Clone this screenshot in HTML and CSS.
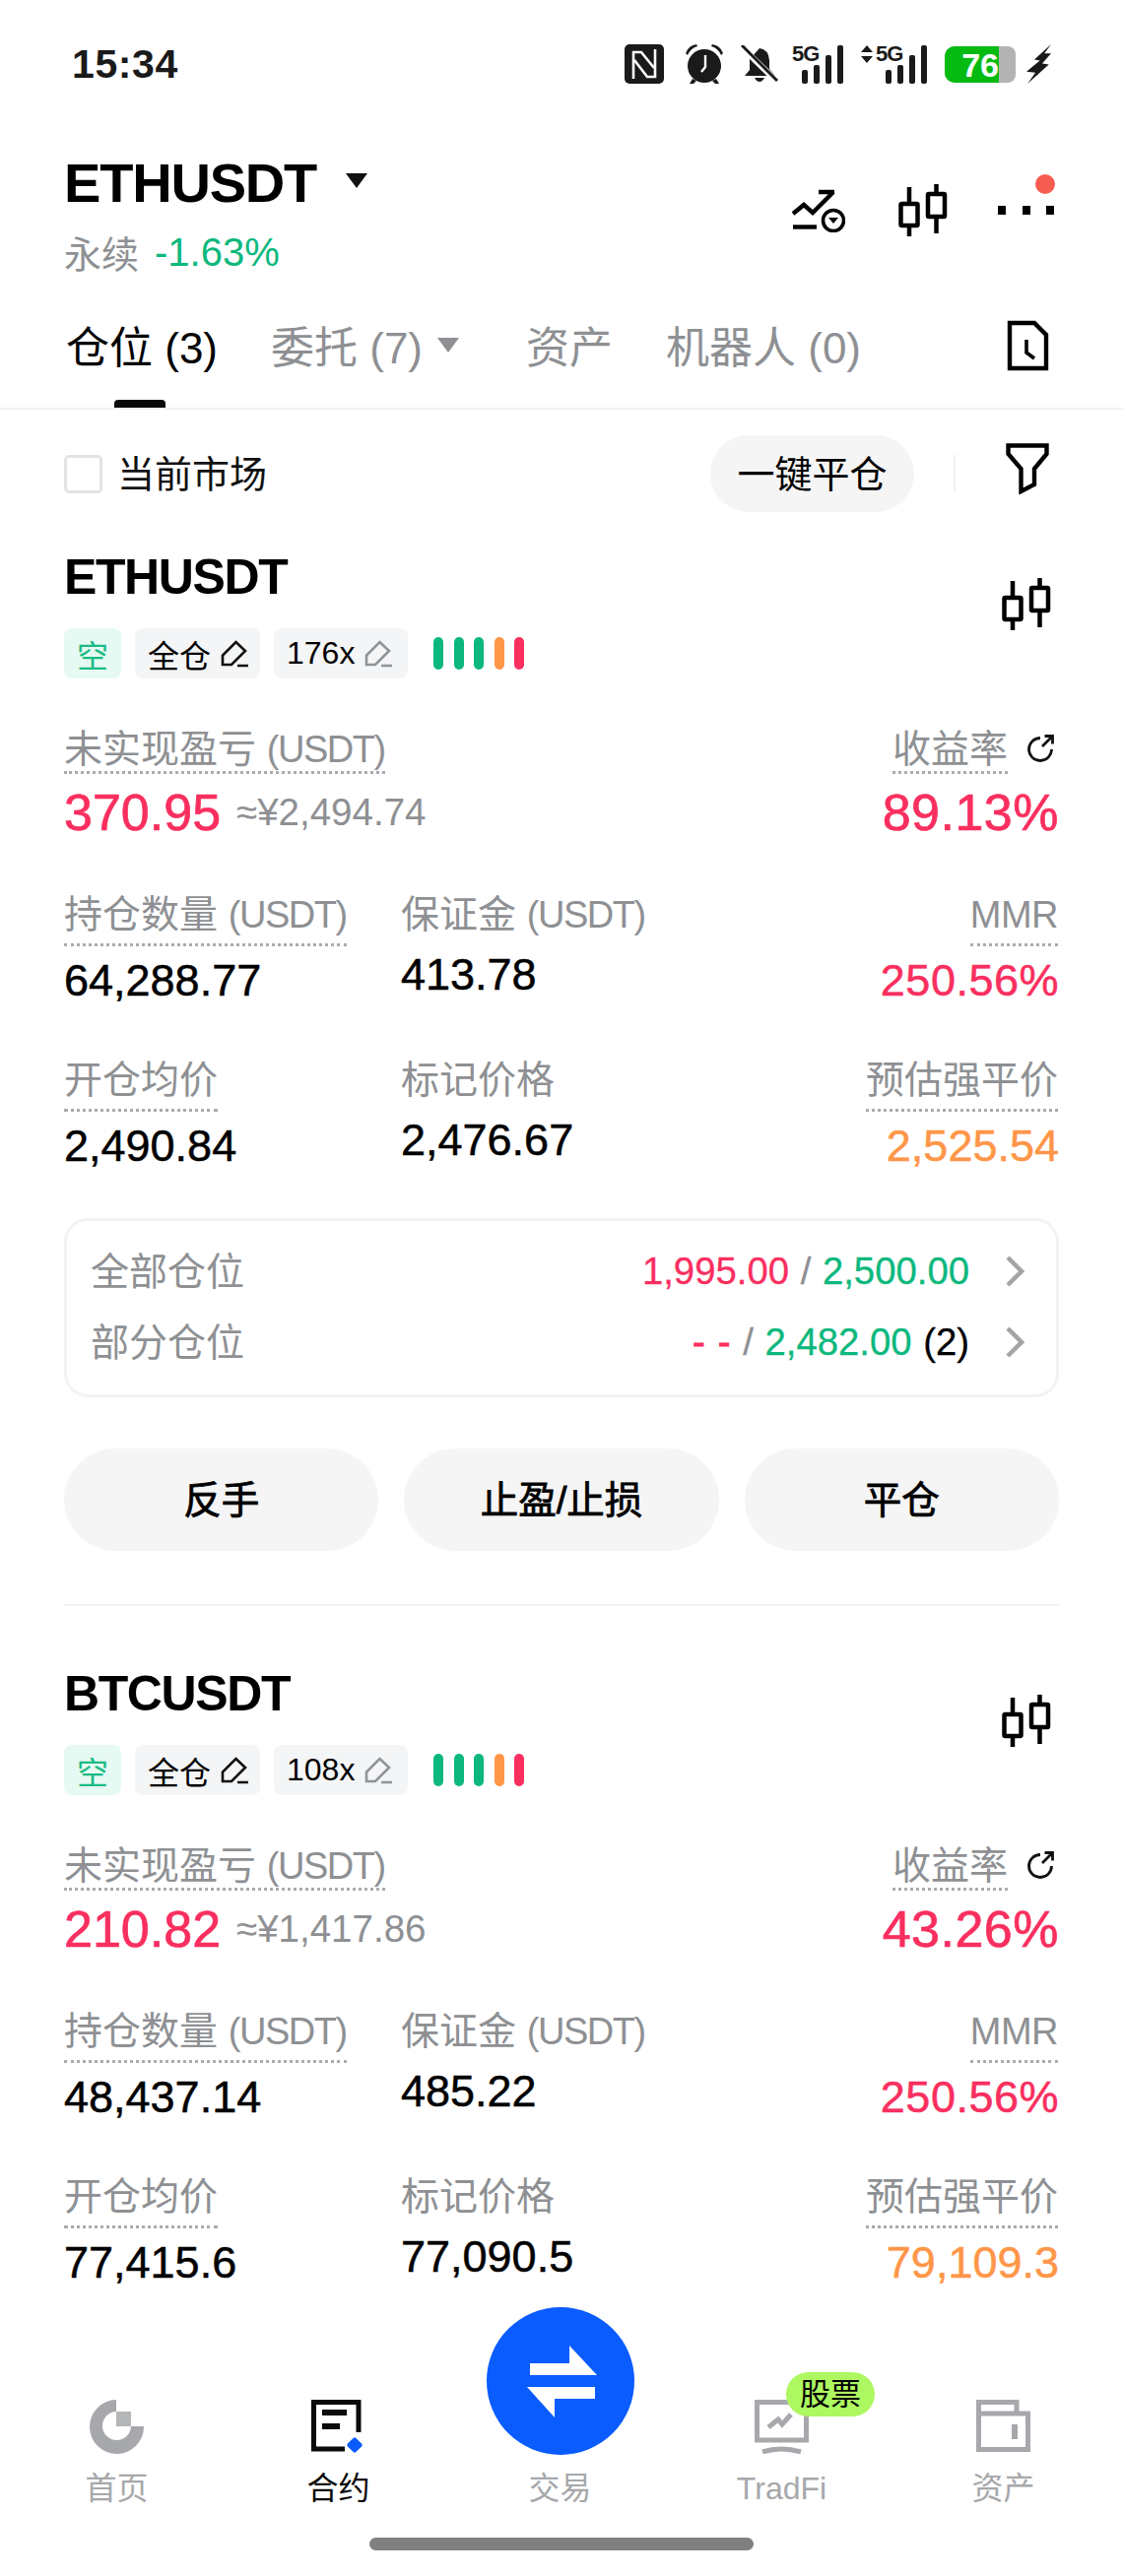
FILE: index.html
```html
<!DOCTYPE html>
<html lang="zh-CN">
  <head>
    <meta charset="UTF-8" />
    <meta name="viewport" content="width=device-width, initial-scale=1" />
    <title>ETHUSDT 仓位</title>
    <link rel="stylesheet" href="styles.css">
  </head>
  <body>
    <svg class="sprite" aria-hidden="true">
      <symbol id="candle" viewBox="0 0 50 54">
        <g fill="none" stroke="currentColor" stroke-width="4.5">
          <rect x="2.5" y="20" width="17" height="22" rx="1" />
          <path d="M11 3V20M11 42V53" />
          <rect x="30" y="10" width="17" height="23" rx="1" />
          <path d="M38.5 0V10M38.5 33V50" />
        </g>
      </symbol>
      <symbol id="pencil" viewBox="0 0 28 28">
        <path d="M2 25V15.5L15.5 2L25 11L11 25ZM17 26H28" fill="none" stroke="currentColor" stroke-width="2.6" />
      </symbol>
      <symbol id="refresh" viewBox="0 0 30 30">
        <g fill="none" stroke="currentColor" stroke-width="2.8">
          <path d="M15 4.5A11.5 11.5 0 1 0 26.5 16" />
          <path d="M17 13L27.5 2.5M19.5 2.5H27.5V10.5" />
        </g>
      </symbol>
      <symbol id="chevron" viewBox="0 0 19 32">
        <path d="M2 2L16 16L2 30" fill="none" stroke="currentColor" stroke-width="4.5" />
      </symbol>
    </svg>

    <div class="status">
      <span class="time">15:34</span>
      <div class="status-icons">
        <svg class="ic-nfc" viewBox="0 0 40 40">
          <rect width="40" height="40" rx="5" fill="#1a1a1a" />
          <path d="M9 35V8H17L30 24M31 5V33H23L10 16" fill="none" stroke="#fff" stroke-width="2.6" />
        </svg>
        <svg class="ic-alarm" viewBox="0 0 40 42">
          <circle cx="20" cy="23" r="17" fill="#1a1a1a" />
          <path d="M1 10Q4 2 12 1L13 3Q6 5 3 12ZM39 10Q36 2 28 1L27 3Q34 5 37 12Z" fill="#1a1a1a" />
          <path d="M8 36L5 41H9L12 38ZM32 36L35 41H31L28 38Z" fill="#1a1a1a" />
          <path d="M21 12V24L17 29" fill="none" stroke="#fff" stroke-width="2.4" />
        </svg>
        <svg class="ic-bell" viewBox="0 0 38 38">
          <path d="M19 3Q28 4 29 15V24L35 31H4L9 25V14Z" fill="#1a1a1a" />
          <path d="M14 33H24Q22 37 19 37T14 33Z" fill="#1a1a1a" />
          <path d="M0 1L37 37" stroke="#fff" stroke-width="6" />
          <path d="M1 0L37 36" stroke="#1a1a1a" stroke-width="3" />
        </svg>
        <div class="signal">
          <span class="net">5G</span>
          <i class="bar b1"></i><i class="bar b2"></i><i class="bar b3"></i><i class="bar b4"></i>
        </div>
        <div class="signal signal-data">
          <svg class="updown" viewBox="0 0 12 18"><path d="M6 0L12 7H0ZM6 18L0 11H12Z" fill="#1a1a1a" /></svg>
          <span class="net">5G</span>
          <i class="bar b1"></i><i class="bar b2"></i><i class="bar b3"></i><i class="bar b4"></i>
        </div>
        <div class="battery"><span class="battery-fill">76</span></div>
        <svg class="ic-bolt" viewBox="0 0 22 39" preserveAspectRatio="none">
          <path d="M22 0L7 15L12 16L0 27L8 28L1 39L20 20L14 19L22 9L16 9Z" fill="#1a1a1a" />
        </svg>
      </div>
    </div>

    <header class="head">
      <div>
        <div class="pair">ETHUSDT<i class="tri tri-pair"></i></div>
        <div class="pair-sub"><span class="perp">永续</span><span class="change">-1.63%</span></div>
      </div>
      <div class="head-tools">
        <svg class="ic-chart" viewBox="0 0 54 44">
          <g fill="none" stroke="#000" stroke-width="4.4">
            <path d="M1 25L12 16L21 24L42 3M27 3H43" />
            <path d="M1 38.5H25" />
            <circle cx="42" cy="32" r="10.5" stroke-width="3.6" />
          </g>
          <path d="M37 29H47L42 35Z" />
        </svg>
        <svg class="ic-candle"><use href="#candle" /></svg>
        <div class="more">
          <i></i><i></i><i></i>
          <span class="red-dot"></span>
        </div>
      </div>
    </header>

    <nav class="tabs">
      <div class="tab active">仓位 (3)</div>
      <div class="tab">委托 (7)<i class="tri tri-tab"></i></div>
      <div class="tab">资产</div>
      <div class="tab">机器人 (0)</div>
      <svg class="ic-doc" viewBox="0 0 43 52">
        <path d="M3 3H28L40 15V49H3Z" fill="none" stroke="#000" stroke-width="4.4" />
        <path d="M20 20V33L28 39" fill="none" stroke="#000" stroke-width="3.6" />
      </svg>
    </nav>

    <main class="content">
      <div class="filter-row">
        <label class="check"><span class="check-box"></span><span class="check-text">当前市场</span></label>
        <div class="filter-right">
          <button class="close-all">一键平仓</button>
          <span class="vline"></span>
          <svg class="ic-filter" viewBox="0 0 44 52">
            <path d="M2.5 2.5H41.5V11L29 26V42L15.5 49V26L2.5 11Z" fill="none" stroke="#000" stroke-width="4.4" />
          </svg>
        </div>
      </div>

      <section class="position">
        <div class="pos-head">
          <div>
            <h2 class="pos-title">ETHUSDT</h2>
            <div class="tags">
              <span class="tag tag-short">空</span>
              <span class="tag">全仓<svg class="ic-pencil"><use href="#pencil" /></svg></span>
              <span class="tag">176x<svg class="ic-pencil muted"><use href="#pencil" /></svg></span>
              <span class="risk"><i class="g"></i><i class="g"></i><i class="g"></i><i class="o"></i><i class="r"></i></span>
            </div>
          </div>
          <svg class="ic-candle pos-candle"><use href="#candle" /></svg>
        </div>

        <div class="pnl">
          <div class="metric">
            <span class="label dotted tight">未实现盈亏 <span class="unit">(USDT)</span></span>
            <div class="pnl-value"><span class="big red">370.95</span><span class="approx">≈¥2,494.74</span></div>
          </div>
          <div class="metric right">
            <div class="label-line">
              <span class="label dotted tight">收益率</span>
              <svg class="ic-refresh"><use href="#refresh" /></svg>
            </div>
            <div class="pnl-value"><span class="big pct red">89.13%</span></div>
          </div>
        </div>

        <div class="grid">
          <div class="metric"><span class="label dotted">持仓数量 <span class="unit">(USDT)</span></span><div class="value">64,288.77</div></div>
          <div class="metric"><span class="label">保证金 <span class="unit">(USDT)</span></span><div class="value plain">413.78</div></div>
          <div class="metric right"><span class="label dotted"><span class="unit mmr">MMR</span></span><div class="value pct red">250.56%</div></div>
          <div class="metric"><span class="label dotted">开仓均价</span><div class="value">2,490.84</div></div>
          <div class="metric"><span class="label">标记价格</span><div class="value plain">2,476.67</div></div>
          <div class="metric right"><span class="label dotted">预估强平价</span><div class="value orange">2,525.54</div></div>
        </div>

        <div class="tpsl">
          <div class="tpsl-row">
            <span class="tpsl-name">全部仓位</span>
            <span class="tpsl-val"><span class="red">1,995.00</span> <span class="grey">/</span> <span class="green">2,500.00</span></span>
            <svg class="ic-chevron"><use href="#chevron" /></svg>
          </div>
          <div class="tpsl-row">
            <span class="tpsl-name">部分仓位</span>
            <span class="tpsl-val"><span class="red dashes">--</span> <span class="grey">/</span> <span class="green">2,482.00</span> (2)</span>
            <svg class="ic-chevron"><use href="#chevron" /></svg>
          </div>
        </div>

        <div class="actions">
          <button>反手</button>
          <button>止盈/止损</button>
          <button>平仓</button>
        </div>
      </section>

      <section class="position">
        <div class="pos-head">
          <div>
            <h2 class="pos-title">BTCUSDT</h2>
            <div class="tags">
              <span class="tag tag-short">空</span>
              <span class="tag">全仓<svg class="ic-pencil"><use href="#pencil" /></svg></span>
              <span class="tag">108x<svg class="ic-pencil muted"><use href="#pencil" /></svg></span>
              <span class="risk"><i class="g"></i><i class="g"></i><i class="g"></i><i class="o"></i><i class="r"></i></span>
            </div>
          </div>
          <svg class="ic-candle pos-candle"><use href="#candle" /></svg>
        </div>

        <div class="pnl">
          <div class="metric">
            <span class="label dotted tight">未实现盈亏 <span class="unit">(USDT)</span></span>
            <div class="pnl-value"><span class="big red">210.82</span><span class="approx">≈¥1,417.86</span></div>
          </div>
          <div class="metric right">
            <div class="label-line">
              <span class="label dotted tight">收益率</span>
              <svg class="ic-refresh"><use href="#refresh" /></svg>
            </div>
            <div class="pnl-value"><span class="big pct red">43.26%</span></div>
          </div>
        </div>

        <div class="grid">
          <div class="metric"><span class="label dotted">持仓数量 <span class="unit">(USDT)</span></span><div class="value">48,437.14</div></div>
          <div class="metric"><span class="label">保证金 <span class="unit">(USDT)</span></span><div class="value plain">485.22</div></div>
          <div class="metric right"><span class="label dotted"><span class="unit mmr">MMR</span></span><div class="value pct red">250.56%</div></div>
          <div class="metric"><span class="label dotted">开仓均价</span><div class="value">77,415.6</div></div>
          <div class="metric"><span class="label">标记价格</span><div class="value plain">77,090.5</div></div>
          <div class="metric right"><span class="label dotted">预估强平价</span><div class="value orange">79,109.3</div></div>
        </div>
      </section>
    </main>

    <footer class="bottom">
      <div class="trade-btn">
        <svg viewBox="0 0 150 150">
          <path d="M44 57H84V39L112 69H44ZM41 81H110V93H69V112Z" fill="#fff" />
        </svg>
      </div>
      <div class="nav">
        <div class="nav-item">
          <svg class="nav-icon" viewBox="0 0 55 55">
            <path d="M27 0A27.5 27.5 0 1 0 55 27H42A14.5 14.5 0 1 1 27 12Z" fill="#a6a8ab" />
            <rect x="27" y="12" width="15" height="15" fill="#b4b6b8" />
          </svg>
          <span>首页</span>
        </div>
        <div class="nav-item active">
          <svg class="nav-icon" viewBox="0 0 55 55">
            <path d="M34 50H2.5V2.5H48V33" fill="none" stroke="#0a0a0a" stroke-width="5" />
            <path d="M11 13H36M11 27H29" fill="none" stroke="#0a0a0a" stroke-width="6" />
            <rect x="38" y="38" width="12" height="12" rx="2" transform="rotate(45 44 46) translate(0 2)" fill="#0a5cff" />
          </svg>
          <span>合约</span>
        </div>
        <div class="nav-item">
          <div class="nav-icon"></div>
          <span>交易</span>
        </div>
        <div class="nav-item">
          <svg class="nav-icon" viewBox="0 0 55 55">
            <path d="M2.5 2.5H52.5V41H2.5Z" fill="none" stroke="#a6a8ab" stroke-width="5" />
            <path d="M8 53Q27 47 47 53" fill="none" stroke="#a6a8ab" stroke-width="5" />
            <path d="M14 28L24 20L28 25L37 15" fill="none" stroke="#a6a8ab" stroke-width="5" />
          </svg>
          <span>TradFi</span>
          <b class="badge">股票</b>
        </div>
        <div class="nav-item">
          <svg class="nav-icon wallet" viewBox="0 0 55 55">
            <path d="M2.5 16V2.5H41V14M2.5 14H52.5V50.5H2.5Z" fill="none" stroke="#a6a8ab" stroke-width="5" />
            <rect x="36" y="25" width="6" height="15" fill="#a6a8ab" />
          </svg>
          <span>资产</span>
        </div>
      </div>
      <div class="home-bar"></div>
    </footer>
  </body>
</html>
```

FILE: styles.css
```css
* {
  box-sizing: border-box;
}
body {
  width: 1140px;
  height: 2616px;
  margin: 0;
  display: flex;
  flex-direction: column;
  overflow: hidden;
  background: #fff;
  color: #000;
  font-family: "Liberation Sans", "Noto Sans CJK SC", sans-serif;
}
button {
  border: 0;
  font-family: inherit;
  color: #000;
}
i {
  display: block;
}
.sprite {
  position: absolute;
  width: 0;
  height: 0;
}
.red {
  color: #f92f5f;
}
.green {
  color: #0cb87d;
}
.orange {
  color: #ff9648;
}
.grey {
  color: #8e9093;
}

/* status bar */
.status {
  height: 130px;
  flex: none;
  display: flex;
  justify-content: space-between;
  align-items: center;
  padding: 0 73px;
}
.time {
  font-size: 41px;
  font-weight: 700;
  letter-spacing: 0.6px;
  color: #1a1a1a;
}
.status-icons {
  display: flex;
  align-items: center;
}
.ic-nfc {
  width: 40px;
  height: 40px;
  margin-right: 21px;
}
.ic-alarm {
  width: 40px;
  height: 42px;
  margin-right: 17px;
}
.ic-bell {
  width: 38px;
  height: 38px;
  margin-right: 14px;
}
.signal {
  position: relative;
  width: 52px;
  height: 40px;
  margin-right: 18px;
}
.signal-data {
  width: 67px;
}
.signal .net {
  position: absolute;
  left: 0;
  top: -3px;
  font-size: 22px;
  font-weight: 700;
  letter-spacing: -1px;
  color: #1a1a1a;
}
.signal-data .net {
  left: 15px;
}
.updown {
  position: absolute;
  left: 0;
  top: 1px;
  width: 12px;
  height: 18px;
}
.bar {
  position: absolute;
  bottom: 0;
  width: 6px;
  border-radius: 2px;
  background: #1a1a1a;
}
.b1 {
  right: 36px;
  height: 14px;
}
.b2 {
  right: 24px;
  height: 19px;
}
.b3 {
  right: 12px;
  height: 29px;
}
.b4 {
  right: 0;
  height: 39px;
}
.battery {
  width: 72px;
  height: 37px;
  border-radius: 10px 8px 8px 10px;
  background: #b3b3b3;
  overflow: hidden;
  margin-right: 11px;
}
.battery-fill {
  display: block;
  width: 55px;
  height: 100%;
  background: #05bb12;
  color: #fff;
  font-size: 34px;
  font-weight: 700;
  line-height: 38px;
  text-align: right;
}
.ic-bolt {
  width: 25px;
  height: 40px;
}

/* header */
.head {
  height: 150px;
  flex: none;
  padding: 25px 70px 0 65px;
  display: flex;
  justify-content: space-between;
}
.pair {
  display: flex;
  align-items: center;
  height: 60px;
  font-size: 56px;
  font-weight: 700;
  letter-spacing: -1.2px;
}
.tri {
  width: 0;
  height: 0;
  border-left: 11px solid transparent;
  border-right: 11px solid transparent;
  border-top: 15px solid #111;
}
.tri-pair {
  margin-left: 30px;
  margin-top: -4px;
}
.pair-sub {
  display: flex;
  align-items: center;
  height: 44px;
  margin-top: 19px;
}
.perp {
  font-size: 38px;
  color: #8e9093;
  padding-bottom: 2px;
}
.change {
  margin-left: 16px;
  font-size: 40px;
  color: #0cb87d;
}
.head-tools {
  position: relative;
  display: flex;
  align-items: flex-start;
}
.ic-chart {
  width: 54px;
  height: 44px;
  margin-top: 37px;
  margin-right: 54px;
}
.ic-candle {
  width: 50px;
  height: 54px;
  color: #000;
}
.head-tools .ic-candle {
  margin-top: 32px;
  margin-right: 51px;
}
.more {
  position: relative;
  width: 57px;
  display: flex;
  justify-content: space-between;
  margin-top: 54px;
}
.more i {
  width: 8px;
  height: 9px;
  background: #000;
}
.red-dot {
  position: absolute;
  right: -1px;
  top: -32px;
  width: 20px;
  height: 20px;
  border-radius: 50%;
  background: #f75c50;
}

/* tabs */
.tabs {
  flex: none;
  height: 136px;
  padding: 48px 75px 0 67px;
  display: flex;
  align-items: flex-start;
  gap: 54px;
  border-bottom: 2px solid #f2f3f4;
}
.tab {
  position: relative;
  display: flex;
  align-items: center;
  height: 44px;
  font-size: 44px;
  white-space: pre;
  color: #8e9093;
}
.tab.active {
  color: #000;
}
.tab.active::after {
  content: "";
  position: absolute;
  left: 49px;
  top: 78px;
  width: 52px;
  height: 8px;
  border-radius: 4px 4px 0 0;
  background: #0a0a0a;
}
.tri-tab {
  margin-left: 15px;
  margin-right: 14px;
  border-top-color: #8e9093;
}
.ic-doc {
  width: 43px;
  height: 52px;
  margin-left: auto;
  margin-top: -3px;
}

/* filter row */
.content {
  flex: 1;
  min-height: 0;
  overflow: hidden;
}
.filter-row {
  display: flex;
  justify-content: space-between;
  align-items: center;
  height: 78px;
  margin: 26px 75px 0 65px;
}
.check {
  display: flex;
  align-items: center;
  gap: 15px;
  font-size: 38px;
  color: #111;
}
.check-text {
  padding-bottom: 6px;
}
.check-box {
  width: 39px;
  height: 39px;
  border: 3px solid #e3e4e5;
  border-radius: 5px;
}
.filter-right {
  display: flex;
  align-items: center;
}
.close-all {
  width: 207px;
  height: 78px;
  padding: 0 0 5px;
  border-radius: 39px;
  background: #f5f5f5;
  font-size: 38px;
}
.vline {
  width: 2px;
  height: 38px;
  margin: 0 51px 0 40px;
  background: #f0f0f0;
}
.ic-filter {
  width: 44px;
  height: 52px;
  margin-top: -10px;
}

/* position card */
.position {
  margin: 0 65px;
  padding-top: 41px;
  padding-bottom: 54px;
}
.position + .position {
  padding-top: 64px;
  border-top: 2px solid #f2f3f4;
}
.pos-head {
  display: flex;
  justify-content: space-between;
  align-items: flex-start;
}
.pos-title {
  margin: 0;
  font-size: 50px;
  line-height: 50px;
  font-weight: 700;
  letter-spacing: -1.4px;
}
.pos-candle {
  margin-top: 26px;
  margin-right: 8px;
}
.tags {
  display: flex;
  align-items: center;
  gap: 14px;
  margin-top: 27px;
}
.tag {
  display: flex;
  align-items: center;
  gap: 10px;
  height: 51px;
  padding: 0 12px 0 13px;
  border-radius: 8px;
  background: #f4f5f6;
  font-size: 32px;
}
.tag-short {
  width: 58px;
  justify-content: center;
  padding: 0;
  background: #e6faf3;
  color: #1bbb84;
}
.ic-pencil {
  width: 28px;
  height: 28px;
  color: #111;
}
.ic-pencil.muted {
  margin-right: 4px;
  color: #919396;
}
.risk {
  display: flex;
  gap: 10.5px;
  margin-left: 12px;
}
.risk i {
  width: 10px;
  height: 33px;
  border-radius: 5px;
}
.risk .g {
  background: #0cb87d;
}
.risk .o {
  background: #ff9648;
}
.risk .r {
  background: #f92f5f;
}

/* metrics */
.pnl {
  display: flex;
  justify-content: space-between;
  margin-top: 50px;
}
.metric {
  display: flex;
  flex-direction: column;
  align-items: flex-start;
}
.metric.right {
  align-items: flex-end;
}
.label {
  height: 42px;
  font-size: 39px;
  line-height: 44px;
  color: #8e9093;
  white-space: pre;
}
.metric.right > .label {
  margin-right: 1px;
}
.unit {
  font-size: 38px;
  letter-spacing: -1.5px;
}
.unit.mmr {
  letter-spacing: -0.5px;
}
.label.dotted {
  height: 54px;
  border-bottom: 3px dotted #a9abad;
}
.label.dotted.tight {
  height: 47px;
}
.label-line {
  display: flex;
  align-items: flex-start;
}
.ic-refresh {
  width: 30px;
  height: 30px;
  margin: 6px 4px 0 18px;
  color: #111;
}
.pnl-value {
  display: flex;
  align-items: center;
  margin-top: 10px;
}
.big {
  font-size: 52px;
  line-height: 58px;
  -webkit-text-stroke: 0.7px currentColor;
}
.pct {
  letter-spacing: 0.5px;
}
.approx {
  margin-left: 16px;
  font-size: 38.5px;
  color: #8e9093;
}
.grid {
  display: grid;
  grid-template-columns: 342px 1fr auto;
  row-gap: 54px;
  margin-top: 53px;
}
.value {
  margin-top: 10px;
  font-size: 45px;
  line-height: 50px;
  -webkit-text-stroke: 0.5px currentColor;
}
.value.plain {
  margin-top: 16px;
}

/* tp/sl box */
.tpsl {
  margin-top: 48px;
  padding: 15px 32px 17px 24px;
  border: 3px solid #f2f3f4;
  border-radius: 24px;
}
.tpsl-row {
  display: flex;
  align-items: center;
  height: 72px;
}
.tpsl-name {
  padding-bottom: 7px;
  font-size: 39px;
  color: #8e9093;
}
.tpsl-val {
  margin-left: auto;
  font-size: 38.3px;
  white-space: pre;
  word-spacing: 1px;
  -webkit-text-stroke: 0.3px currentColor;
}
.dashes {
  margin-right: -12px;
  letter-spacing: 13px;
  -webkit-text-stroke: 0.8px currentColor;
}
.ic-chevron {
  width: 19px;
  height: 32px;
  margin-left: 37px;
  color: #a3a4a6;
}
.actions {
  display: grid;
  grid-template-columns: repeat(3, 1fr);
  gap: 26px;
  margin-top: 52px;
}
.actions button {
  height: 104px;
  padding: 0 0 6px;
  border-radius: 52px;
  background: #f5f5f5;
  font-size: 38.5px;
  -webkit-text-stroke: 0.8px currentColor;
}

/* bottom nav */
.bottom {
  position: relative;
  flex: none;
  height: 286px;
  padding-top: 107px;
  background: #fff;
}
.trade-btn {
  position: absolute;
  left: 494px;
  top: 13px;
  width: 150px;
  height: 150px;
  border-radius: 50%;
  background: #0a5cff;
}
.trade-btn svg {
  display: block;
  width: 150px;
  height: 150px;
}
.nav {
  display: grid;
  grid-template-columns: repeat(5, 225px);
  padding-left: 6px;
}
.nav-item {
  position: relative;
  display: flex;
  flex-direction: column;
  align-items: center;
  font-size: 32px;
  line-height: 38px;
  color: #a6a8ab;
}
.nav-item.active {
  color: #0a0a0a;
}
.nav-icon {
  width: 55px;
  height: 55px;
  margin-bottom: 16px;
}
.badge {
  position: absolute;
  left: 117px;
  top: -28px;
  width: 90px;
  height: 45px;
  border-radius: 23px;
  background: #adf760;
  color: #000;
  font-size: 31px;
  font-weight: 400;
  line-height: 45px;
  text-align: center;
}
.home-bar {
  width: 390px;
  height: 13px;
  margin: 31px auto 0;
  border-radius: 7px;
  background: #808080;
}
```
